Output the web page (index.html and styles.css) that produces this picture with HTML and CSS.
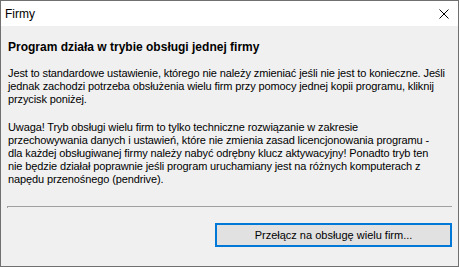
FILE: index.html
```html
<!DOCTYPE html>
<html lang="pl">
<head>
    <meta charset="UTF-8">
    <title>Firmy</title>
    <link rel="stylesheet" href="styles.css">
</head>
<body>
    <div class="window">
        <div class="titlebar">
            <span class="title">Firmy</span>
            <svg class="close" width="10" height="10" viewBox="0 0 10 10">
                <path d="M0.5 0.5 L9.5 9.5 M9.5 0.5 L0.5 9.5" stroke="#000" stroke-width="1" fill="none"/>
            </svg>
        </div>

        <div class="client">
            <h1 class="heading">Program działa w trybie obsługi jednej firmy</h1>

            <p class="text">Jest to standardowe ustawienie, którego nie należy zmieniać jeśli nie jest to konieczne. Jeśli<br>jednak zachodzi potrzeba obsłużenia wielu firm przy pomocy jednej kopii programu, kliknij<br>przycisk poniżej.</p>

            <p class="text">Uwaga! Tryb obsługi wielu firm to tylko techniczne rozwiązanie w zakresie<br>przechowywania danych i ustawień, które nie zmienia zasad licencjonowania programu -<br>dla każdej obsługiwanej firmy należy nabyć odrębny klucz aktywacyjny! Ponadto tryb ten<br>nie będzie działał poprawnie jeśli program uruchamiany jest na różnych komputerach z<br>napędu przenośnego (pendrive).</p>

            <div class="separator"></div>

            <div class="actions">
                <button class="btn">Przełącz na obsługę wielu firm...</button>
            </div>
        </div>
    </div>
</body>
</html>
```

FILE: styles.css
```css
* {
    margin: 0;
    padding: 0;
    box-sizing: border-box;
}

body {
    font-family: 'Liberation Sans', Arial, sans-serif;
    background: #f0f0f0;
}

/* okno */
.window {
    width: 459px;
    height: 267px;
    border: 1px solid #707070;
    display: flex;
    flex-direction: column;
    background: #f0f0f0;
}

.titlebar {
    height: 25px;
    background: #ffffff;
    display: flex;
    align-items: center;
    justify-content: space-between;
    padding: 0 9px 0 4px;
    flex-shrink: 0;
}

.title {
    font-size: 12px;
    color: #000;
}

.close {
    display: block;
    margin-top: 1px;
}

/* zawartość */
.client {
    flex: 1;
    padding: 14px 6px 0 7px;
    color: #000;
}

.heading {
    font-size: 12px;
    font-weight: bold;
    line-height: 14px;
    margin-bottom: 13px;
}

.text {
    font-size: 11px;
    line-height: 13px;
    letter-spacing: -0.12px;
    white-space: nowrap;
    margin-bottom: 15px;
}

.separator {
    height: 2px;
    margin: 20px 0 0 -1px;
    border-top: 1px solid #a0a0a0;
    border-left: 1px solid #a0a0a0;
}

.actions {
    display: flex;
    justify-content: flex-end;
    padding-top: 15px;
}

.btn {
    width: 237px;
    height: 24px;
    background: #e1e1e1;
    border: 2px solid #0078d7;
    font-family: 'Liberation Sans', Arial, sans-serif;
    font-size: 11px;
    color: #000;
}
```
